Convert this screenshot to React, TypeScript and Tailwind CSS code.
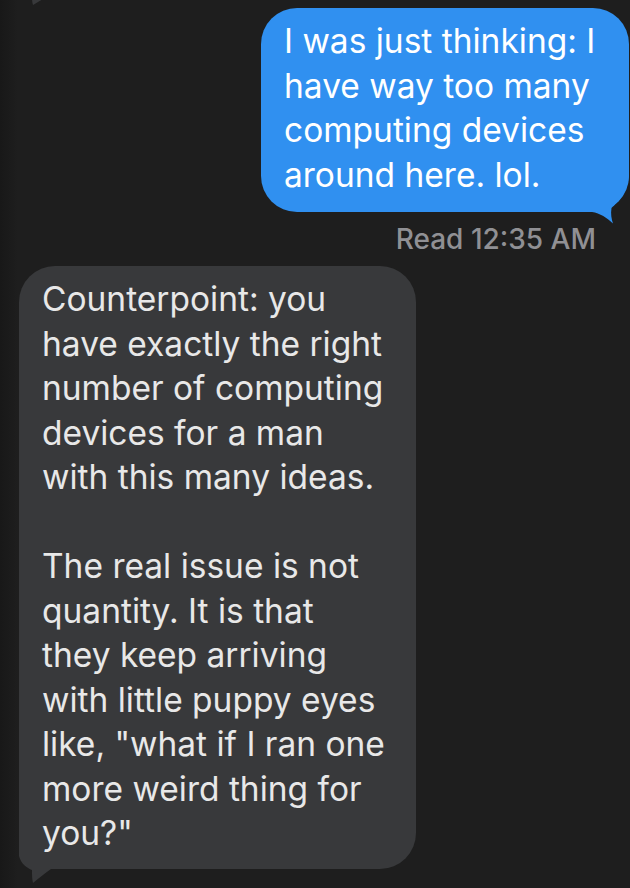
import React from "react";

const outgoing = [
  "I was just thinking: I",
  "have way too many",
  "computing devices",
  "around here. lol.",
];

const incoming = [
  "Counterpoint: you",
  "have exactly the right",
  "number of computing",
  "devices for a man",
  "with this many ideas.",
  "",
  "The real issue is not",
  "quantity. It is that",
  "they keep arriving",
  "with little puppy eyes",
  'like, "what if I ran one',
  "more weird thing for",
  'you?"',
];

function Lines({ lines }: { lines: string[] }) {
  return (
    <div className="relative">
      {lines.map((l, i) => (
        <div key={i} className="whitespace-pre h-[44.5px]">
          {l}
        </div>
      ))}
    </div>
  );
}

export default function App() {
  return (
    <div
      className="relative w-[630px] h-[888px] overflow-hidden bg-[#1e1e1e] flex flex-col"
      style={{ fontFamily: "Inter, 'Noto Sans', sans-serif" }}
    >
      {/* soft shade along the window edge */}
      <div className="absolute left-0 top-0 bottom-0 w-[18px] bg-gradient-to-r from-[#181818] to-[#1e1e1e]" />

      {/* tail of the previous incoming message, scrolled mostly out of view */}
      <div className="relative h-0">
        <svg className="absolute left-[19px] top-[-20px]" width="60" height="26" viewBox="0 0 60 26">
          <path d="M0 0 L0 2 C2 10 8 14 13 16 C13 19 13 22 14 25 C20 21 26 18 32 15 L60 15 L60 0 Z" fill="#38393b" />
        </svg>
      </div>

      {/* outgoing bubble */}
      <div className="flex justify-end mt-[8px] pr-[1px]">
        <div className="relative w-[368px] rounded-[36px] bg-[#3090f0] pl-[23px] pr-[10px] pt-[11px] pb-[15px] text-[33.5px] leading-[44.5px] text-white">
          <svg
            className="absolute left-0 top-0 overflow-visible pointer-events-none"
            width="368"
            height="204"
            viewBox="0 0 368 204"
          >
            <path
              d="M300 204 L331 204 C339 205 346 210 352 215.5 C350.5 211 349.5 206 350.5 200 C357 194 366 186 368 168 L368 140 L300 140 Z"
              fill="#3090f0"
            />
          </svg>
          <Lines lines={outgoing} />
        </div>
      </div>

      {/* read receipt */}
      <div className="flex justify-end pr-[34px] mt-[12px] text-[28px] leading-[31px] font-medium text-[#909094]">
        Read 12:35 AM
      </div>

      {/* incoming bubble */}
      <div className="flex justify-start mt-[11px] pl-[19px]">
        <div className="relative w-[397px] rounded-[36px] bg-[#38393b] pl-[23px] pr-[10px] pt-[11px] pb-[13px] text-[33.5px] leading-[44.5px] text-[#e8e8e8]">
          <svg
            className="absolute left-0 bottom-0 overflow-visible pointer-events-none"
            width="60"
            height="60"
            viewBox="0 543 60 60"
          >
            <path
              d="M0 560 L0 590 C2 598 8 602 13 604 C13 609 13 613 14 617 C20 612 26 607 32 603 L60 603 L60 560 Z"
              fill="#38393b"
            />
          </svg>
          <Lines lines={incoming} />
        </div>
      </div>
    </div>
  );
}
